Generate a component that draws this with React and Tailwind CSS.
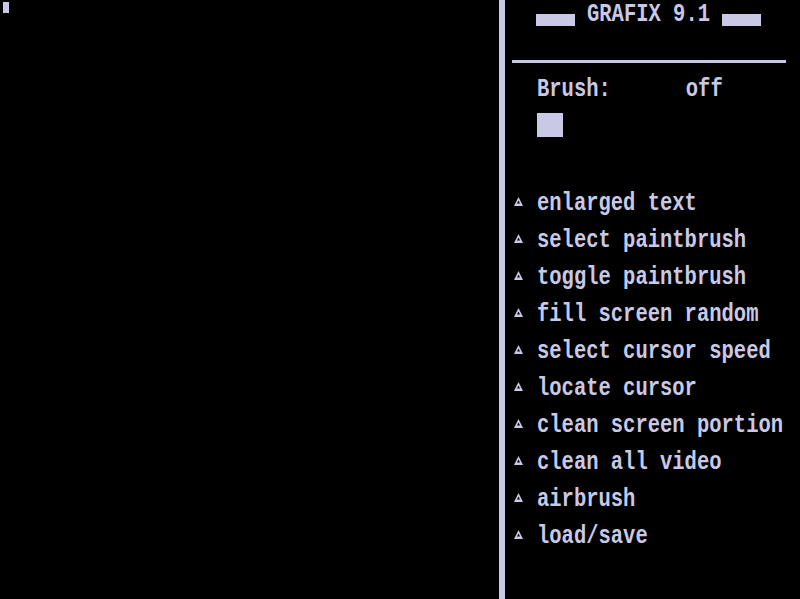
import React from 'react'

const items = [
  'enlarged text',
  'select paintbrush',
  'toggle paintbrush',
  'fill screen random',
  'select cursor speed',
  'locate cursor',
  'clean screen portion',
  'clean all video',
  'airbrush',
  'load/save',
]

// tall pixel-style text: monospace stretched vertically around the baseline
function Txt({ children, className = '' }) {
  return (
    <span
      className={`inline-block h-[24px] leading-[24px] text-[20.5px] font-bold whitespace-pre scale-y-[1.3] origin-[center_17.5px] ${className}`}
      style={{ fontFamily: '"Liberation Mono", "DejaVu Sans Mono", monospace' }}
    >
      {children}
    </span>
  )
}

function Tri() {
  return (
    <svg width="9" height="9" viewBox="0 0 9 9" className="shrink-0 self-start mt-[11px]">
      <polygon points="4.5,0 9,9 0,9" fill="#c9c9e6" />
      <polygon points="4.5,3.5 6,6.5 3,6.5" fill="#000" />
    </svg>
  )
}

export default function App() {
  return (
    <div className="w-[800px] h-[599px] bg-black text-[#c9c9e6] flex overflow-hidden">
      {/* drawing area */}
      <div className="w-[499px] h-full">
        <div className="ml-[3px] mt-[2px] w-[6px] h-[11px] bg-[#c9c9e6]" />
      </div>

      {/* divider */}
      <div className="w-[6px] h-full bg-[#c9c9e6]" />

      {/* menu panel */}
      <div className="flex-1 flex flex-col">
        <div className="flex items-start pt-[4px] pl-[31px]">
          <div className="mt-[10px] w-[39px] h-[12px] bg-[#c9c9e6]" />
          <Txt className="ml-[12px]">GRAFIX 9.1</Txt>
          <div className="mt-[10px] ml-[12px] w-[39px] h-[12px] bg-[#c9c9e6]" />
        </div>

        <div className="mt-[32px] ml-[7px] w-[274px] h-[3px] bg-[#c9c9e6]" />

        <div className="mt-[16px] pl-[32px] flex">
          <Txt>Brush:</Txt>
          <Txt className="ml-[75px]">off</Txt>
        </div>

        <div className="mt-[10px] ml-[32px] w-[26px] h-[24px] bg-[#c9c9e6]" />

        <div className="mt-[49px] flex flex-col">
          {items.map((t, i) => (
            <div key={i} className="h-[37px] flex items-center pl-[9px] gap-[14px]">
              <Tri />
              <Txt>{t}</Txt>
            </div>
          ))}
        </div>
      </div>
    </div>
  )
}
